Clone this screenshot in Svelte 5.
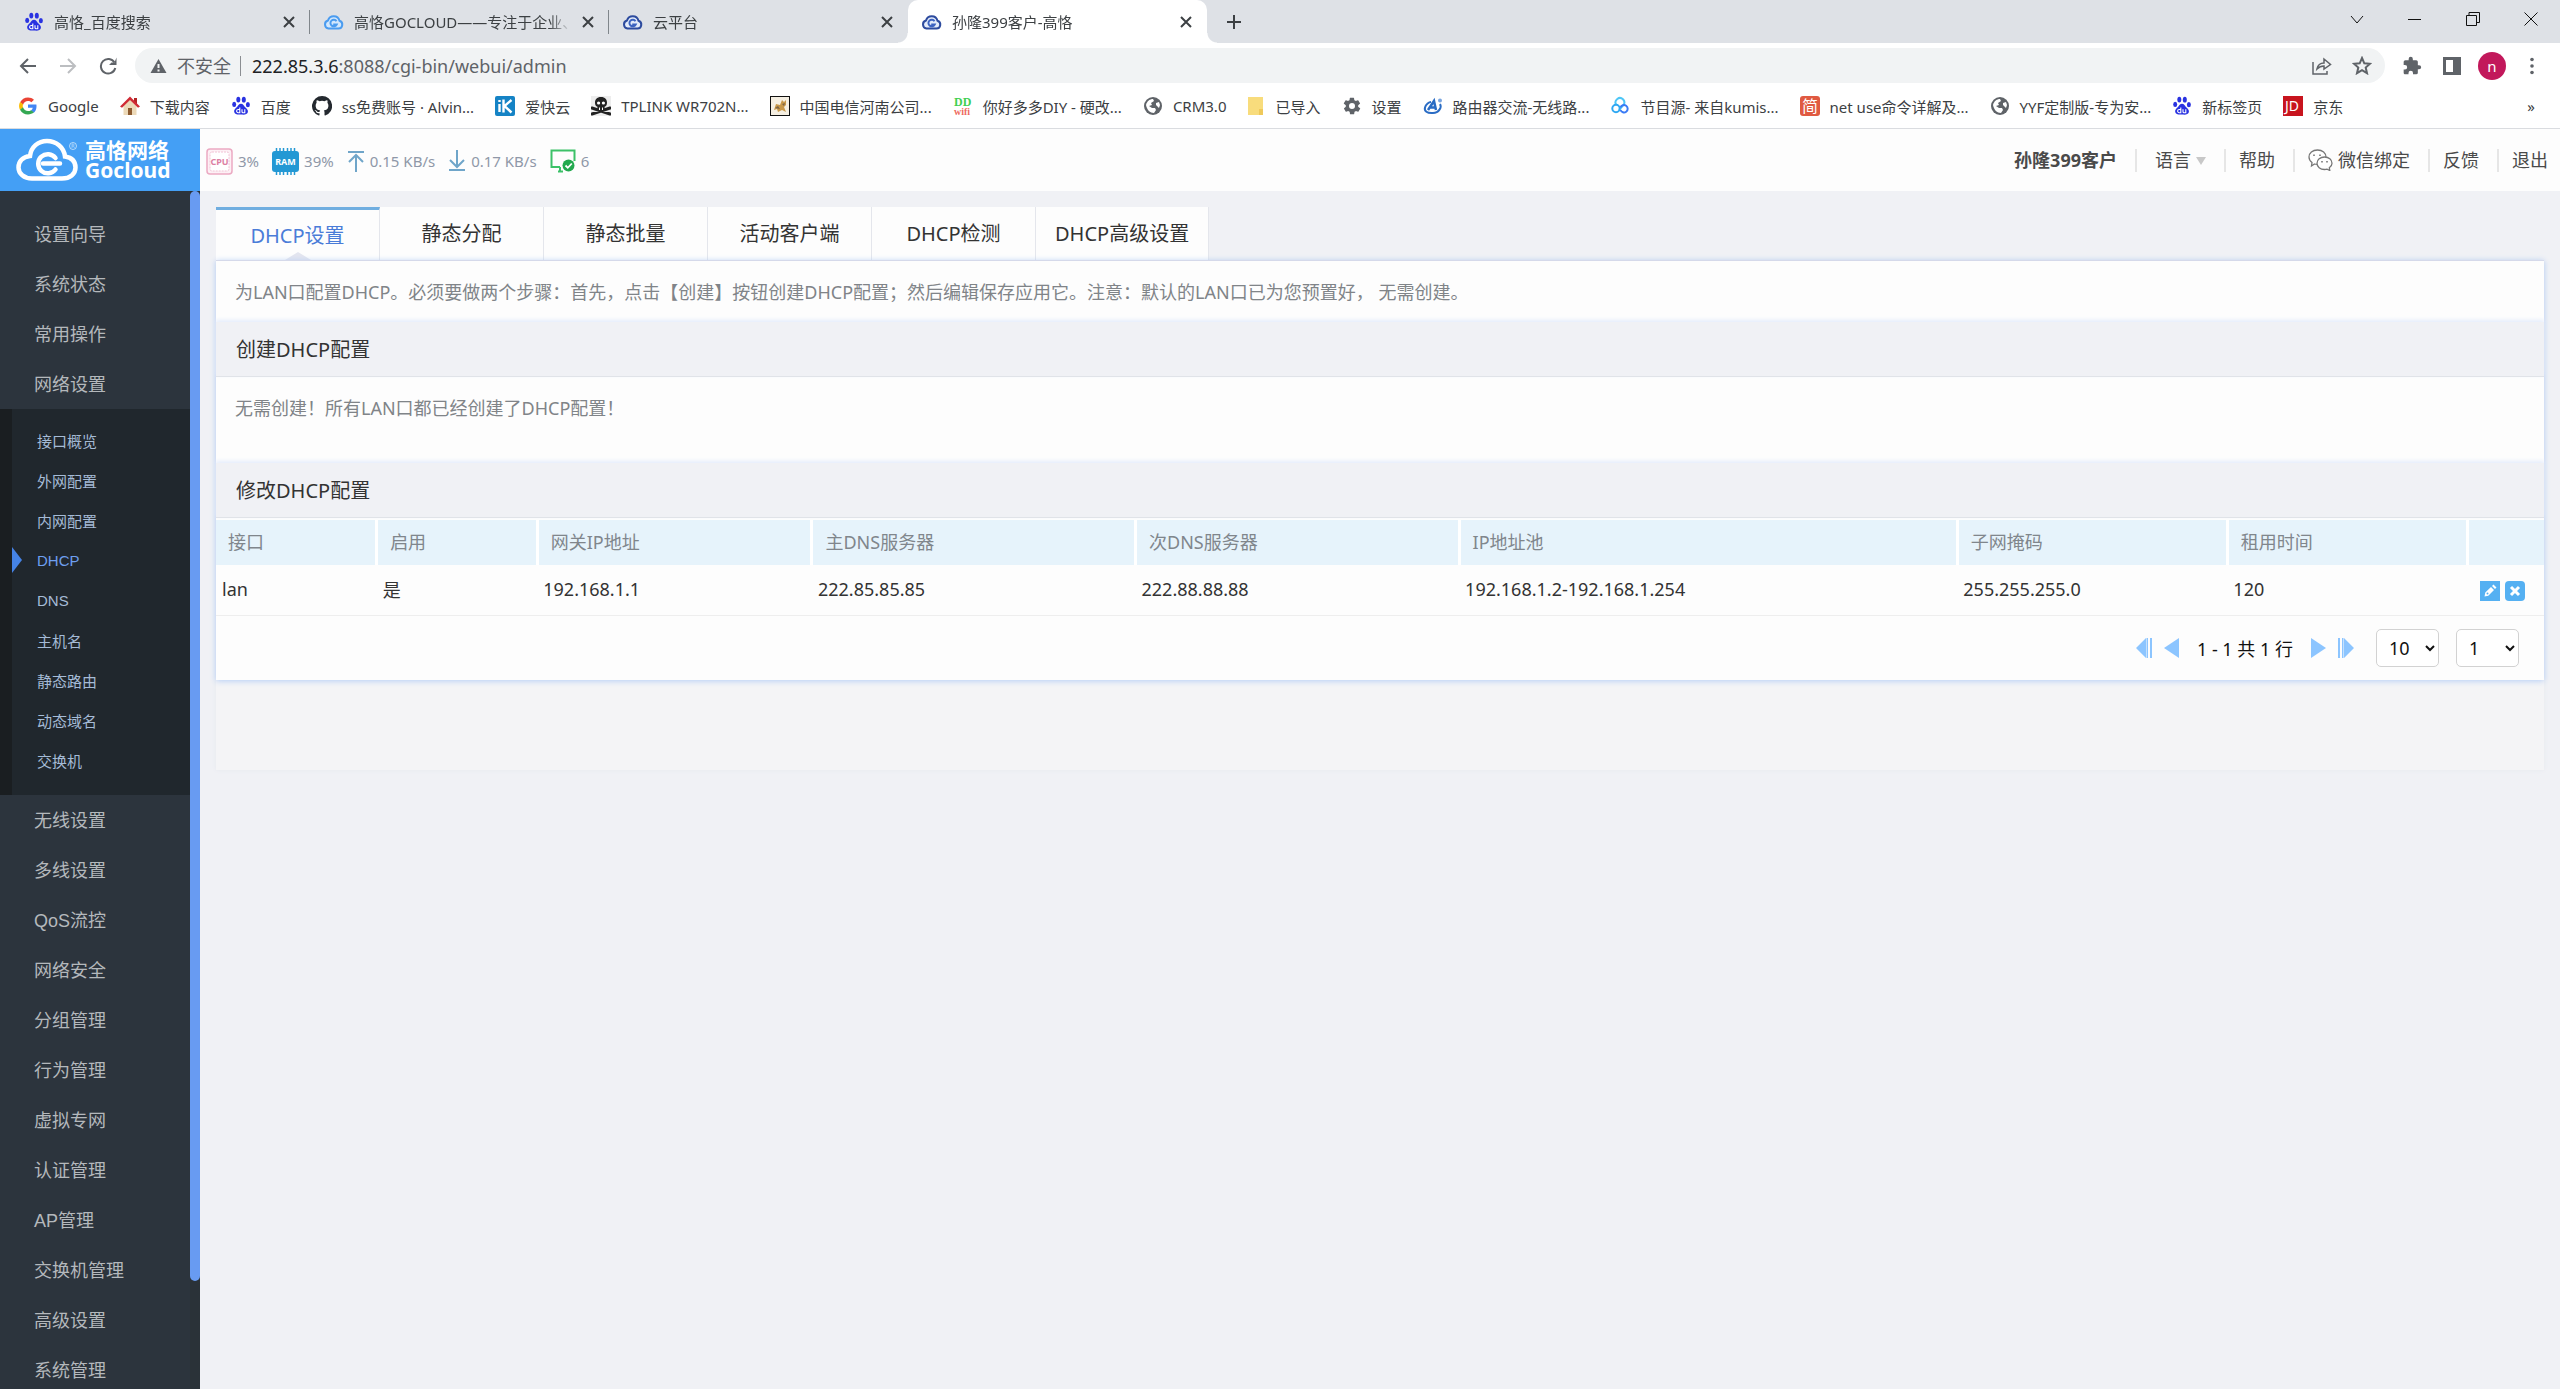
<script>
  const browserTabs = [
    { icon: "baidu", title: "高恪_百度搜索" },
    { icon: "cloudLight", title: "高恪GOCLOUD——专注于企业、" },
    { icon: "cloudDark", title: "云平台" },
    { icon: "cloudDark", title: "孙隆399客户-高恪", active: true }
  ];

  const bookmarks = [
    { icon: "google", title: "Google" },
    { icon: "home", title: "下载内容" },
    { icon: "baidu", title: "百度" },
    { icon: "github", title: "ss免费账号 · Alvin..." },
    { icon: "ikuai", title: "爱快云" },
    { icon: "skull", title: "TPLINK WR702N..." },
    { icon: "dog", title: "中国电信河南公司..." },
    { icon: "ddwifi", title: "你好多多DIY - 硬改..." },
    { icon: "globe", title: "CRM3.0" },
    { icon: "folder", title: "已导入" },
    { icon: "gear", title: "设置" },
    { icon: "router", title: "路由器交流-无线路..." },
    { icon: "rings", title: "节目源- 来自kumis..." },
    { icon: "jian", title: "net use命令详解及..." },
    { icon: "globe", title: "YYF定制版-专为安..." },
    { icon: "baidu", title: "新标签页" },
    { icon: "jd", title: "京东" }
  ];

  const menu = [
    { label: "设置向导" },
    { label: "系统状态" },
    { label: "常用操作" },
    {
      label: "网络设置",
      children: ["接口概览", "外网配置", "内网配置", "DHCP", "DNS", "主机名", "静态路由", "动态域名", "交换机"]
    },
    { label: "无线设置" },
    { label: "多线设置" },
    { label: "QoS流控" },
    { label: "网络安全" },
    { label: "分组管理" },
    { label: "行为管理" },
    { label: "虚拟专网" },
    { label: "认证管理" },
    { label: "AP管理" },
    { label: "交换机管理" },
    { label: "高级设置" },
    { label: "系统管理" }
  ];

  const pageTabs = ["DHCP设置", "静态分配", "静态批量", "活动客户端", "DHCP检测", "DHCP高级设置"];

  // widths are shares of the table, in percent
  const columns = [
    { title: "接口", key: "iface", width: 6.9 },
    { title: "启用", key: "enabled", width: 6.9 },
    { title: "网关IP地址", key: "gateway", width: 11.8 },
    { title: "主DNS服务器", key: "dns1", width: 13.9 },
    { title: "次DNS服务器", key: "dns2", width: 13.9 },
    { title: "IP地址池", key: "pool", width: 21.4 },
    { title: "子网掩码", key: "mask", width: 11.6 },
    { title: "租用时间", key: "lease", width: 10.3 }
  ];

  const rows = [
    {
      iface: "lan",
      enabled: "是",
      gateway: "192.168.1.1",
      dns1: "222.85.85.85",
      dns2: "222.88.88.88",
      pool: "192.168.1.2-192.168.1.254",
      mask: "255.255.255.0",
      lease: "120"
    }
  ];

  let currentTab = "DHCP设置";
  let currentItem = "DHCP";
  let pageSize = "10";
  let pageNo = "1";
</script>

<style>
  :global(body) {
    background: #f0f1f5;
  }

  .app {
    display: flex;
    flex-direction: column;
    height: 100vh;
    overflow: hidden;
    font-family: "Noto Sans", "Noto Sans CJK SC", sans-serif;
    font-size: 18px;
    color: #333;
  }

  .app :global(*) {
    box-sizing: border-box;
  }

  button {
    padding: 0;
    border: 0;
    background: none;
    font: inherit;
    color: inherit;
    display: inline-flex;
    align-items: center;
    justify-content: center;
  }

  a {
    color: inherit;
    text-decoration: none;
  }

  svg {
    display: block;
    flex: none;
  }

  /* browser chrome */
  .tabstrip {
    display: flex;
    flex: none;
    height: 43px;
    padding-left: 11px;
    background: #dee1e6;
    font-size: 15px;
    color: #3c4043;
  }

  .browser-tab {
    position: relative;
    display: flex;
    align-items: center;
    gap: 10px;
    flex: 0 1 299px;
    min-width: 0;
    padding: 0 14px 0 13px;
  }

  .browser-tab.divided::after {
    content: "";
    position: absolute;
    right: 0;
    top: 10px;
    width: 1px;
    height: 24px;
    background: #80868b;
  }

  .browser-tab.active {
    background: #fff;
    border-radius: 10px 10px 0 0;
  }

  .browser-tab.active::before,
  .browser-tab.active::after {
    content: "";
    position: absolute;
    bottom: 0;
    width: 10px;
    height: 10px;
  }

  .browser-tab.active::before {
    left: -10px;
    background: radial-gradient(circle at 0 0, transparent 9px, #fff 10px);
  }

  .browser-tab.active::after {
    right: -10px;
    background: radial-gradient(circle at 100% 0, transparent 9px, #fff 10px);
  }

  .browser-tab .title {
    flex: 1;
    overflow: hidden;
    white-space: nowrap;
    mask-image: linear-gradient(90deg, #000 90%, transparent);
  }

  .new-tab {
    width: 54px;
  }

  .window-buttons {
    display: flex;
    margin-left: auto;
    height: 37px;
    color: #111;
  }

  .window-buttons button {
    width: 58px;
  }

  .toolbar {
    display: flex;
    align-items: center;
    flex: none;
    height: 45px;
    padding: 0 8px;
    background: #fff;
    color: #5f6368;
  }

  .toolbar button {
    width: 40px;
    height: 36px;
  }

  .omnibox {
    display: flex;
    align-items: center;
    flex: 1;
    height: 35px;
    margin: 0 7px;
    padding: 0 3px 0 15px;
    border-radius: 18px;
    background: #f1f3f4;
  }

  .unsafe {
    margin-left: 10px;
    padding-right: 9px;
    border-right: 1px solid #8b8e92;
    line-height: 20px;
  }

  .omnibox label {
    margin-left: 11px;
    color: #202124;
  }

  .omnibox input {
    flex: 1;
    padding: 0;
    border: 0;
    outline: 0;
    background: none;
    font: inherit;
    color: #5f6368;
  }

  .avatar {
    display: inline-flex;
    align-items: center;
    justify-content: center;
    width: 28px;
    height: 28px;
    border-radius: 50%;
    background: #c2185b;
    color: #fff;
    font-size: 15px;
  }

  .bookmarks {
    display: flex;
    align-items: center;
    gap: 21px;
    flex: none;
    height: 41px;
    padding: 0 25px 4px 18px;
    border-bottom: 1px solid #dadce0;
    background: #fff;
    color: #3c4043;
    font-size: 15px;
    white-space: nowrap;
  }

  .bookmarks a {
    display: flex;
    align-items: center;
    gap: 10px;
  }

  .bookmarks button {
    margin-left: auto;
  }

  /* router header */
  .header {
    display: flex;
    align-items: center;
    flex: none;
    height: 62px;
    background: #fdfdfd;
  }

  .logo {
    display: flex;
    align-items: center;
    gap: 7px;
    width: 200px;
    height: 62px;
    padding-left: 16px;
    background: #449ff5;
    color: #fff;
  }

  .logo-name {
    font-weight: 700;
    font-size: 21px;
    line-height: 20px;
  }

  .logo-name span {
    display: block;
  }

  .stats {
    display: flex;
    align-items: center;
    gap: 13px;
    padding: 2px 0 0 6px;
    font-size: 15px;
    color: #8f98a8;
  }

  .stat {
    display: flex;
    align-items: center;
    gap: 5px;
  }

  .user-links {
    display: flex;
    align-items: center;
    margin-left: auto;
    padding-right: 12px;
    line-height: 23px;
    color: #4a4a4a;
  }

  .user-links a,
  .user-links button {
    display: flex;
    align-items: center;
    gap: 5px;
    padding-left: 13px;
    margin-left: 18px;
    border-left: 2px solid #e6e6e6;
  }

  .user-links .lang {
    padding-left: 18px;
  }

  /* layout under the header */
  .main {
    display: flex;
    flex: 1;
    min-height: 0;
  }

  .sidebar {
    width: 190px;
    flex: none;
    padding-top: 18px;
    overflow: hidden;
    background: #2c343d;
    font-family: "Liberation Sans", "Noto Sans CJK SC", sans-serif;
    color: #b4b8bc;
  }

  .sidebar ul {
    margin: 0;
    padding: 0;
    list-style: none;
  }

  .sidebar a {
    display: flex;
    align-items: center;
    height: 50px;
    padding: 0 0 3px 34px;
  }

  .sidebar .submenu {
    padding: 12px 0 14px;
    border-left: 12px solid #1a1e21;
    background: #20272d;
    font-size: 15px;
    color: #a5bbd6;
  }

  .sidebar .submenu a {
    position: relative;
    height: 40px;
    padding: 0 0 2px 25px;
  }

  .submenu a.active {
    color: #6e9ff0;
  }

  .submenu a.active::before {
    content: "";
    position: absolute;
    left: 0;
    border-left: 10px solid #4583e6;
    border-top: 13px solid transparent;
    border-bottom: 13px solid transparent;
  }

  .scroll-track {
    width: 10px;
    flex: none;
    background: #2a3238;
  }

  .scroll-thumb {
    height: 91%;
    border-radius: 5px;
    background: #689bf2;
  }

  .content {
    flex: 1;
    padding: 16px 16px 0;
    overflow: hidden;
  }

  .page-tabs {
    display: flex;
  }

  .page-tabs button {
    position: relative;
    min-width: 164px;
    height: 53px;
    padding: 0 19px 2px;
    border-right: 1px solid #e4e6ec;
    background: #fdfdfd;
    font-size: 20px;
  }

  .page-tabs button.active {
    border-top: 3px solid #70aee0;
    color: #4a7cd8;
  }

  .page-tabs button.active::after {
    content: "";
    position: absolute;
    bottom: 0;
    border-bottom: 8px solid #e3e5ef;
    border-left: 13px solid transparent;
    border-right: 13px solid transparent;
  }

  .card {
    background: #f4f4f6;
    padding-bottom: 90px;
    box-shadow: 0 0 4px #e6e8ee;
  }

  .panel {
    position: relative;
    border-top: 1px solid #d5d9ea;
    background: #fdfdfd;
    box-shadow: 0 1px 6px #b4cdf6;
  }

  .note {
    margin: 0;
    padding: 19px 19px 18px;
    line-height: 24px;
    color: #808488;
  }

  .note.tall {
    padding-bottom: 43px;
  }

  h2 {
    margin: 0;
    padding: 1px 20px 0;
    border-bottom: 1px solid #e0e3e8;
    background: #f0f1f5;
    box-shadow: 0 -2px 4px #e4ecfb;
    font-size: 20px;
    font-weight: 400;
    line-height: 53px;
  }

  table {
    width: 100%;
    margin-top: 2px;
    border-collapse: collapse;
    table-layout: fixed;
    text-align: left;
  }

  th {
    height: 45px;
    padding: 0 12px 3px;
    border-right: 3px solid #fff;
    background: #e6f3fb;
    font-weight: 400;
    color: #80868c;
  }

  th:last-child {
    border-right: 0;
  }

  td {
    height: 50px;
    padding: 0 6px 2px;
    border-bottom: 1px solid #eee;
  }

  .row-actions {
    display: flex;
    gap: 5px;
    padding: 4px 0 0 7px;
  }

  .pager {
    display: flex;
    align-items: center;
    justify-content: flex-end;
    height: 64px;
    padding-right: 25px;
    color: #111;
  }

  .pager button {
    width: 27px;
    height: 22px;
  }

  .pager .range {
    margin: 0 12px;
  }

  .pager select {
    width: 63px;
    height: 38px;
    margin-left: 17px;
    padding: 0 0 0 8px;
    border: 1px solid #d2d2d2;
    border-radius: 5px;
    background: #fff;
    font: inherit;
    color: #111;
  }
</style>

{#snippet icon(name)}
  {#if name === "baidu"}
    <svg width="20" height="20" viewBox="0 0 20 20" fill="#2932e1">
      <ellipse cx="7.3" cy="3.6" rx="2" ry="2.9" />
      <ellipse cx="12.8" cy="3.7" rx="2" ry="2.9" />
      <ellipse cx="3.2" cy="8.4" rx="2" ry="2.6" />
      <ellipse cx="16.9" cy="8.7" rx="2" ry="2.6" />
      <path d="M10 7.8c-2 0-2.7 1.7-4 3.1-1.500 1.500-3.300 2.700-2.800 5.200.6 2.900 3.700 2.500 6.800 2.500s6.300.5 6.900-2.500c.4-2.500-1.500-3.700-3-5.200-1.300-1.400-1.900-3.100-3.900-3.100z" />
      <path d="M8.800 11.500v5.200H7.200a1.500 1.500 0 0 1 0-3.200h1.600M11 13.200v2.500q0 1 1 1h1.800v-3.500" fill="none" stroke="#fff" stroke-width="1.100" />
    </svg>
  {:else if name === "cloudLight" || name === "cloudDark"}
    <svg width="21" height="20" viewBox="0 0 21 20" fill="none" stroke={name === "cloudLight" ? "#4b9cf0" : "#2d4b9e"} stroke-width="2">
      <path d="M5.500 16.500h10a4 4 0 0 0 1-7.800A6 6 0 0 0 5 8.500a4.100 4.100 0 0 0 .5 8z" fill={name === "cloudLight" ? "#d3e8fd" : "#e3ebfa"} />
      <path d="M13.500 9.200a3.300 3.300 0 1 0 .2 3.300h-3.500" stroke={name === "cloudLight" ? "#4b9cf0" : "#3c63c0"} />
    </svg>
  {:else if name === "google"}
    <svg width="20" height="20" viewBox="-3 -3 54 54">
      <path fill="#ea4335" d="M24 10.500c3.500 0 6.700 1.200 9.200 3.600l6.900-6.900C35.900 3.300 30.500 1 24 1 14.600 1 6.500 6.400 2.600 14.200l8 6.200C12.400 14.700 17.700 10.500 24 10.500z" />
      <path fill="#4285f4" d="M47 24.500c0-1.600-.2-3.100-.4-4.500H24v9h12.900c-.6 3-2.300 5.500-4.800 7.200l7.700 6C44.400 38 47 31.800 47 24.500z" />
      <path fill="#fbbc05" d="M10.500 28.600a14 14 0 0 1 0-9.200l-8-6.200a24 24 0 0 0 0 21.500z" />
      <path fill="#34a853" d="M24 47c6.500 0 11.900-2.100 15.900-5.800l-7.700-6c-2.200 1.500-4.900 2.300-8.200 2.300-6.300 0-11.600-4.200-13.500-9.900l-8 6.200C6.500 41.600 14.600 47 24 47z" />
    </svg>
  {:else if name === "home"}
    <svg width="20" height="20" viewBox="0 0 20 20">
      <path d="M14 2h3v6h-3z" fill="#b32424" />
      <path d="M3.500 9 10 3l6.500 6v10h-13z" fill="#ecd9b8" />
      <path d="M8 12h4v7H8z" fill="#8c5a2e" />
      <path d="M0 10.500 10 .5l10 10-2 1.200-8-7.700-8 7.700z" fill="#d02b35" />
    </svg>
  {:else if name === "github"}
    <svg width="20" height="20" viewBox="0 0 16 16" fill="#24292f">
      <path d="M8 0a8 8 0 0 0-2.530 15.590c.4.070.55-.17.55-.38v-1.490c-2.230.48-2.690-.94-2.690-.94-.36-.92-.89-1.170-.89-1.170-.73-.5.050-.49.050-.49.8.060 1.230.83 1.230.83.72 1.230 1.880.87 2.340.67.070-.52.280-.87.510-1.070-1.780-.2-3.650-.89-3.650-3.950 0-.88.310-1.590.820-2.150-.080-.2-.36-1.020.080-2.120 0 0 .67-.21 2.200.82a7.600 7.600 0 0 1 4 0c1.530-1.040 2.200-.82 2.200-.82.44 1.100.16 1.920.080 2.120.51.560.82 1.270.82 2.150 0 3.070-1.870 3.750-3.650 3.950.29.250.54.730.54 1.480v2.200c0 .21.150.46.550.38A8 8 0 0 0 8 0z" />
    </svg>
  {:else if name === "ikuai"}
    <svg width="20" height="20" viewBox="0 0 20 20">
      <rect width="20" height="20" rx="2" fill="#1583c5" />
      <path d="M4.500 8v8M4.500 4v2M8.500 3.500v13M16.500 4l-7 6 7 6.500" fill="none" stroke="#fff" stroke-width="2.400" />
    </svg>
  {:else if name === "skull"}
    <svg width="20" height="20" viewBox="0 0 20 20">
      <path d="M0 0h20v20H0z" fill="#ededed" />
      <path d="M1 12l18 6M19 12 1 18" stroke="#222" stroke-width="3" stroke-linecap="round" />
      <path d="M10 1C5.800 1 4 3.500 4 6.700c0 2.500 1 3.300 2.400 4V14h7.200v-3.300c1.400-.7 2.400-1.500 2.400-4C16 3.500 14.200 1 10 1z" fill="#222" />
      <circle cx="7.600" cy="7" r="1.600" fill="#fff" />
      <circle cx="12.400" cy="7" r="1.600" fill="#fff" />
      <path d="M8.500 11.500V14M11.500 11.500V14" stroke="#fff" />
    </svg>
  {:else if name === "dog"}
    <svg width="20" height="20" viewBox="0 0 20 20">
      <rect x=".5" y=".5" width="19" height="19" fill="#f5efe2" stroke="#111" />
      <path d="m4 14 2-6 4 1 2-5 2 2 2-2v5l-2 2 2 5-4-2-4 2-1-3z" fill="#c8984a" />
      <path d="m5 12 3-2 2 3zM12 8l3-1-1 3z" fill="#7a6448" />
    </svg>
  {:else if name === "ddwifi"}
    <svg width="20" height="20" viewBox="0 0 20 20" font-family="Liberation Serif, serif" font-weight="700">
      <text x="1" y="10" font-size="12" fill="#3fcf52">DD</text>
      <text x="1" y="19" font-size="10" fill="#ee6a5f">wifi</text>
    </svg>
  {:else if name === "globe"}
    <svg width="20" height="20" viewBox="0 0 20 20">
      <circle cx="10" cy="10" r="9" fill="#5f6368" />
      <path d="M3 9c1-4 4-6 7-6l1 2-3 2 1 2-3 1 3 2h3l1 2-2 3c-4 0-7-3-8-8zM13 7l3-1 1 3-1 3-3-3z" fill="#fff" />
    </svg>
  {:else if name === "folder"}
    <svg width="18" height="20" viewBox="0 0 18 20">
      <path d="M1 1h15v18H1z" fill="#f8dc7c" />
      <path d="M12 13h4v6h-4z" fill="#efc95a" />
    </svg>
  {:else if name === "gear"}
    <svg width="20" height="20" viewBox="0 0 24 24" fill="#5f6368">
      <path d="M19.400 13a7.500 7.500 0 0 0 0-2l2.100-1.600a.5.5 0 0 0 .1-.6l-2-3.500a.5.5 0 0 0-.6-.2l-2.500 1a7.300 7.300 0 0 0-1.700-1l-.4-2.600a.5.5 0 0 0-.5-.4h-4a.5.5 0 0 0-.5.4l-.4 2.600a7.700 7.700 0 0 0-1.700 1l-2.500-1a.5.5 0 0 0-.6.200l-2 3.500a.5.5 0 0 0 .1.600L4.600 11a8 8 0 0 0 0 2l-2.100 1.600a.5.5 0 0 0-.1.600l2 3.500c.1.200.4.300.6.200l2.500-1c.5.400 1.100.7 1.700 1l.4 2.600c0 .2.300.4.500.4h4c.2 0 .5-.2.5-.4l.4-2.600a7.300 7.300 0 0 0 1.700-1l2.500 1c.2.100.5 0 .6-.2l2-3.500a.5.5 0 0 0-.1-.6zM12 15.600a3.600 3.600 0 1 1 0-7.200 3.600 3.600 0 0 1 0 7.200z" />
    </svg>
  {:else if name === "router"}
    <svg width="20" height="20" viewBox="0 0 20 20" fill="none" stroke="#2a6cc4" stroke-width="2">
      <path d="M17 8c2 3-1 9-7 9-6 .5-9-2-8-5.500S6 6 8 6" />
      <path d="m5 14 6-9 2 9M7 11.500h5" stroke-width="2.500" />
      <circle cx="17" cy="4.500" r="1" stroke="#7aa5e0" />
    </svg>
  {:else if name === "rings"}
    <svg width="20" height="20" viewBox="0 0 20 20" fill="none" stroke-width="2">
      <path d="M6 8.500A4.400 4.400 0 1 1 13.500 9L9 14" stroke="#4ec6f6" />
      <circle cx="6" cy="12.500" r="3.700" stroke="#2fa8f2" />
      <path d="M10.500 11.500a3.700 3.700 0 1 1 0 2.500" stroke="#3a7bf5" />
    </svg>
  {:else if name === "jian"}
    <svg width="20" height="20" viewBox="0 0 20 20">
      <rect width="20" height="20" rx="3" fill="#e05a41" />
      <text x="2" y="16" font-size="16" fill="#fff">简</text>
    </svg>
  {:else if name === "jd"}
    <svg width="20" height="20" viewBox="0 0 20 20">
      <rect width="20" height="20" fill="#c8141e" />
      <text x="2" y="15" font-size="14" fill="#fff">JD</text>
    </svg>
  {/if}
{/snippet}

<div class="app">
  <div class="tabstrip">
    {#each browserTabs as tab, i}
      <div class="browser-tab" class:active={tab.active} class:divided={i < 2}>
        {@render icon(tab.icon)}
        <span class="title">{tab.title}</span>
        <button aria-label="关闭标签页">
          <svg width="14" height="14" viewBox="0 0 14 14" stroke="#3c4043" stroke-width="2"><path d="m2 2 10 10M12 2 2 12" /></svg>
        </button>
      </div>
    {/each}
    <button class="new-tab" aria-label="新标签页">
      <svg width="16" height="16" viewBox="0 0 16 16" stroke="#3c4043" stroke-width="2"><path d="M8 1v14M1 8h14" /></svg>
    </button>
    <div class="window-buttons">
      <button aria-label="搜索标签页">
        <svg width="14" height="14" viewBox="0 0 14 14" fill="none" stroke="currentColor"><path d="m1 4 6 7 6-7" /></svg>
      </button>
      <button aria-label="最小化">
        <svg width="14" height="14" viewBox="0 0 14 14" stroke="currentColor"><path d="M0 7.500h13" /></svg>
      </button>
      <button aria-label="还原">
        <svg width="14" height="14" viewBox="0 0 14 14" fill="none" stroke="currentColor"><path d="M.5 3.500h10v10H.5zM3 3.500v-3h10.500v10H11" /></svg>
      </button>
      <button aria-label="关闭">
        <svg width="14" height="14" viewBox="0 0 14 14" stroke="currentColor"><path d="m.5.5 13 13M13.500.5l-13 13" /></svg>
      </button>
    </div>
  </div>

  <div class="toolbar">
    <button aria-label="后退">
      <svg width="18" height="18" viewBox="0 0 18 18" fill="none" stroke="#5f6368" stroke-width="2"><path d="M17 9H2M9 2 2 9l7 7" /></svg>
    </button>
    <button aria-label="前进">
      <svg width="18" height="18" viewBox="0 0 18 18" fill="none" stroke="#bcbec1" stroke-width="2"><path d="M1 9h15M9 2l7 7-7 7" /></svg>
    </button>
    <button aria-label="重新加载">
      <svg width="18" height="18" viewBox="0 0 18 18" fill="none" stroke="#5f6368" stroke-width="2"><path d="M15.500 5.500A7.300 7.300 0 1 0 16.300 11" /><path d="M17.500.5V8H10l2.500-2.500h3z" fill="#5f6368" stroke="none" /></svg>
    </button>
    <div class="omnibox">
      <svg width="17" height="16" viewBox="0 0 17 16"><path d="M8.500 1 16.500 15H.5z" fill="#5f6368" /><path d="M8.500 6v4M8.500 11.500v2" stroke="#f1f3f4" stroke-width="2" /></svg>
      <span class="unsafe">不安全</span>
      <label for="address">222.85.3.6</label>
      <input id="address" type="text" value=":8088/cgi-bin/webui/admin" />
      <button aria-label="分享">
        <svg width="20" height="18" viewBox="0 0 20 18" fill="none" stroke="#5f6368" stroke-width="1.500"><path d="M1 5v12h14v-3" /><path d="M5 12c1-5 4-6 7-6V2l6.500 5.500L12 12V9c-3 0-5 1-7 3z" /></svg>
      </button>
      <button aria-label="添加书签">
        <svg width="20" height="19" viewBox="0 0 20 19" fill="none" stroke="#5f6368" stroke-width="2"><path d="m10 2 2.300 5.300 5.700.5-4.300 3.800 1.300 5.600-5-3-5 3 1.300-5.600L2 7.800l5.700-.5z" /></svg>
      </button>
    </div>
    <button aria-label="扩展程序">
      <svg width="20" height="20" viewBox="0 0 24 24" fill="#5f6368"><path d="M20.500 11H19V7a2 2 0 0 0-2-2h-4V3.500a2.500 2.500 0 0 0-5 0V5H4a2 2 0 0 0-2 2v3.800h1.500a2.700 2.700 0 0 1 0 5.400H2V20c0 1.100.9 2 2 2h3.800v-1.500a2.700 2.700 0 0 1 5.400 0V22H17a2 2 0 0 0 2-2v-4h1.500a2.500 2.500 0 0 0 0-5z" /></svg>
    </button>
    <button aria-label="侧边栏">
      <svg width="18" height="18" viewBox="0 0 18 18"><path d="M0 0h18v18H0zM3 3v12h7V3z" fill="#5f6368" fill-rule="evenodd" /></svg>
    </button>
    <button><span class="avatar">n</span></button>
    <button aria-label="更多">
      <svg width="4" height="18" viewBox="0 0 4 18" fill="#5f6368"><circle cx="2" cy="2.500" r="1.800" /><circle cx="2" cy="9" r="1.800" /><circle cx="2" cy="15.500" r="1.800" /></svg>
    </button>
  </div>

  <nav class="bookmarks">
    {#each bookmarks as bookmark}
      <a href="#bookmark">{@render icon(bookmark.icon)}<span>{bookmark.title}</span></a>
    {/each}
    <button>»</button>
  </nav>

  <header class="header">
    <div class="logo">
      <svg width="62" height="44" viewBox="0 0 62 44" fill="none" stroke="#fff" stroke-width="4.500">
        <path d="M16 40.500h30c8 0 13.500-4.500 13.500-11 0-6.500-4.500-10-10.500-11C48 9 40 3 31 3S15 9 14 18C7 19 2.500 23 2.500 29.500c0 6 5.500 11 13.500 11z" />
        <path d="M39.500 20A9.600 9.600 0 1 0 39.500 31.500M27 25.500h17" stroke-width="4.500" stroke-linecap="round" />
        <circle cx="57" cy="8" r="3.500" stroke-width="1" opacity=".6" />
        <path d="M56 10V6h1.500q1.500 1 0 2H56m1.500 0 1 2" stroke-width=".7" opacity=".6" />
      </svg>
      <div class="logo-name"><span>高恪网络</span><span>Gocloud</span></div>
    </div>
    <div class="stats">
      <span class="stat">
        <svg width="27" height="27" viewBox="0 0 27 27">
          <rect x="1" y="1" width="25" height="25" rx="3" fill="#fdf0f5" stroke="#eba9c2" stroke-width="1.500" />
          <rect x="4" y="4" width="19" height="19" rx="2" fill="#fff" stroke="#f2c3d5" stroke-dasharray="2 1" />
          <text x="13.500" y="17" font-size="9" font-weight="700" fill="#dc7fa3" text-anchor="middle">CPU</text>
        </svg>
        3%
      </span>
      <span class="stat">
        <svg width="27" height="27" viewBox="0 0 27 27">
          <path d="M4.500 0v27M8 0v27M11.500 0v27M15.500 0v27M19 0v27M22.500 0v27" stroke="#2398d4" stroke-width="1.500" />
          <rect y="3" width="27" height="21" rx="3" fill="#2398d4" />
          <text x="13.500" y="17" font-size="9" font-weight="700" fill="#fff" text-anchor="middle">RAM</text>
        </svg>
        39%
      </span>
      <span class="stat">
        <svg width="18" height="22" viewBox="0 0 18 22" fill="none" stroke="#6fa5c9" stroke-width="2"><path d="M1 2h16M9 22V5M2 12l7-7 7 7" /></svg>
        0.15 KB/s
      </span>
      <span class="stat">
        <svg width="18" height="22" viewBox="0 0 18 22" fill="none" stroke="#6fa5c9" stroke-width="2"><path d="M1 20h16M9 0v17M2 10l7 7 7-7" /></svg>
        0.17 KB/s
      </span>
      <span class="stat">
        <svg width="26" height="24" viewBox="0 0 26 24">
          <path d="M10 18H1.500V1.500h23V12M10 18v4.500M8 22.500h5" fill="none" stroke="#3cc168" stroke-width="2" />
          <circle cx="18.500" cy="16.500" r="6" fill="#22a94e" />
          <path d="m15.500 16.500 2.300 2.300 4-4.300" fill="none" stroke="#fff" stroke-width="1.800" />
        </svg>
        6
      </span>
    </div>
    <nav class="user-links">
      <strong>孙隆399客户</strong>
      <button class="lang">
        语言
        <svg width="10" height="9" viewBox="0 0 10 9" fill="#c8c8c8"><path d="M0 1h10L5 9z" /></svg>
      </button>
      <a href="#help">帮助</a>
      <a href="#wechat">
        <svg width="25" height="22" viewBox="0 0 25 22" fill="#fff" stroke="#777" stroke-width="1.300">
          <path d="M9.500 1C4.500 1 1 4 1 8c0 2.300 1.200 4.200 3 5.500L3.500 17l3-2c1 .3 2 .4 3 .4 5 0 8.500-3 8.500-7.200S14.500 1 9.500 1z" />
          <path d="M16.500 8c-4.300 0-7.500 2.700-7.500 6.300s3.200 6.200 7.500 6.200c.9 0 1.800-.1 2.600-.4l2.700 1.400-.5-2.700c1.700-1.100 2.700-2.700 2.700-4.500C24 10.700 20.800 8 16.500 8z" />
          <path d="M6 5.500v1.500M12 5.500v1.500M14 12v1.500M19 12v1.500" stroke-width="1.600" />
        </svg>
        微信绑定
      </a>
      <a href="#feedback">反馈</a>
      <a href="#logout">退出</a>
    </nav>
  </header>

  <div class="main">
    <nav class="sidebar">
      <ul>
        {#each menu as item}
          <li>
            <a href="#menu">{item.label}</a>
            {#if item.children}
              <ul class="submenu">
                {#each item.children as child}
                  <li><a href="#submenu" class:active={child === currentItem}>{child}</a></li>
                {/each}
              </ul>
            {/if}
          </li>
        {/each}
      </ul>
    </nav>
    <div class="scroll-track"><div class="scroll-thumb"></div></div>

    <main class="content">
      <div class="page-tabs">
        {#each pageTabs as tab}
          <button class:active={tab === currentTab} on:click={() => (currentTab = tab)}>{tab}</button>
        {/each}
      </div>
      <div class="card">
        <div class="panel">
          <p class="note">为LAN口配置DHCP。必须要做两个步骤：首先，点击【创建】按钮创建DHCP配置；然后编辑保存应用它。注意：默认的LAN口已为您预置好， 无需创建。</p>
          <h2>创建DHCP配置</h2>
          <p class="note tall">无需创建！所有LAN口都已经创建了DHCP配置！</p>
          <h2>修改DHCP配置</h2>
          <table>
            <colgroup>
              {#each columns as column}
                <col style="width: {column.width}%" />
              {/each}
              <col />
            </colgroup>
            <thead>
              <tr>
                {#each columns as column}
                  <th>{column.title}</th>
                {/each}
                <th></th>
              </tr>
            </thead>
            <tbody>
              {#each rows as row}
                <tr>
                  {#each columns as column}
                    <td>{row[column.key]}</td>
                  {/each}
                  <td>
                    <div class="row-actions">
                      <button aria-label="编辑">
                        <svg width="20" height="20" viewBox="0 0 20 20"><rect width="20" height="20" fill="#55b0f2" /><path d="m4.500 15.500.8-4L11 6l3 3-5.700 5.700zM12 5l1.500-1.500 3 3L15 8z" fill="#fff" /><circle cx="7.500" cy="12.500" r="1" fill="#55b0f2" /></svg>
                      </button>
                      <button aria-label="删除">
                        <svg width="20" height="20" viewBox="0 0 20 20"><rect width="20" height="20" rx="4" fill="#55b0f2" /><path d="m6 6 8 8M14 6l-8 8" stroke="#fff" stroke-width="3" /></svg>
                      </button>
                    </div>
                  </td>
                </tr>
              {/each}
            </tbody>
          </table>
          <div class="pager">
            <button aria-label="首页">
              <svg width="16" height="20" viewBox="0 0 16 20" fill="#8cc5ff"><path d="M10 0v20L0 10zM10.500 0h1.500v20h-1.500zM14 0h2v20h-2z" /></svg>
            </button>
            <button aria-label="上一页">
              <svg width="15" height="20" viewBox="0 0 15 20" fill="#8cc5ff"><path d="M15 0v20L0 10z" /></svg>
            </button>
            <span class="range">1 - 1 共 1 行</span>
            <button aria-label="下一页">
              <svg width="15" height="20" viewBox="0 0 15 20" fill="#8cc5ff"><path d="M0 0v20l15-10z" /></svg>
            </button>
            <button aria-label="末页">
              <svg width="16" height="20" viewBox="0 0 16 20" fill="#8cc5ff"><path d="M6 0v20l10-10zM4 0h1.500v20H4zM0 0h2v20H0z" /></svg>
            </button>
            <select aria-label="每页行数" bind:value={pageSize}>
              <option>10</option>
              <option>20</option>
              <option>50</option>
            </select>
            <select aria-label="页码" bind:value={pageNo}>
              <option>1</option>
            </select>
          </div>
        </div>
      </div>
    </main>
  </div>
</div>
